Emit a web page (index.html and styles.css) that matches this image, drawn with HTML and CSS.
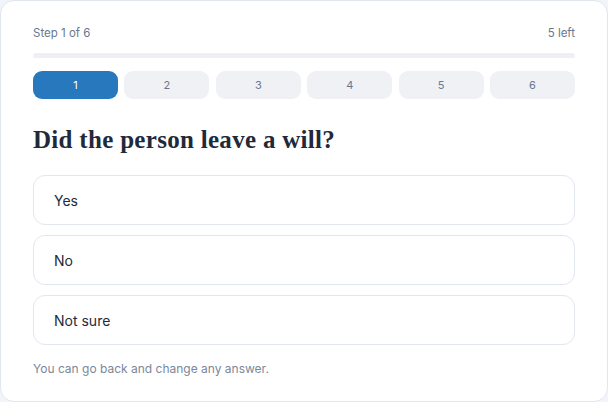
FILE: index.html
```html
<!DOCTYPE html>
<html>
<head>
<meta charset="utf-8">
<link rel="stylesheet" href="styles.css">
</head>
<body>
<div class="card">
  <div class="meta">
    <span>Step 1 of 6</span>
    <span>5 left</span>
  </div>
  <div class="bar"><div class="bar-fill" style="width:0%"></div></div>
  <div class="steps">
    <div class="step active">1</div>
    <div class="step">2</div>
    <div class="step">3</div>
    <div class="step">4</div>
    <div class="step">5</div>
    <div class="step">6</div>
  </div>
  <h1 class="question">Did the person leave a will?</h1>
  <div class="options">
    <div class="option">Yes</div>
    <div class="option">No</div>
    <div class="option">Not sure</div>
  </div>
  <p class="hint">You can go back and change any answer.</p>
</div>
</body>
</html>
```

FILE: styles.css
```css
* { box-sizing: border-box; }
html, body { margin: 0; padding: 0; }
body {
  background: #f1f4f8;
  font-family: Inter, "Noto Sans", "Liberation Sans", sans-serif;
  width: 608px;
  height: 402px;
}
.card {
  width: 608px;
  height: 402px;
  background: #ffffff;
  border: 1px solid #e2e7ef;
  border-radius: 14px;
  padding: 24px 32px 0 32px;
}
.meta {
  display: flex;
  justify-content: space-between;
  font-size: 11.5px;
  line-height: 16px;
  color: #6b778c;
}
.bar {
  margin-top: 12px;
  height: 5px;
  border-radius: 3px;
  background: #eef0f5;
}
.bar-fill { height: 100%; background: #2878be; border-radius: 3px; }
.steps {
  margin-top: 13px;
  display: grid;
  grid-template-columns: repeat(6, 1fr);
  gap: 6.5px;
}
.step {
  height: 28px;
  border-radius: 9px;
  background: #eff1f5;
  color: #6b778c;
  font-size: 11px;
  display: flex;
  align-items: center;
  justify-content: center;
}
.step.active {
  background: #2878be;
  color: #ffffff;
}
.question {
  margin: 26px 0 0 0;
  font-family: "Liberation Serif", "DejaVu Serif", serif;
  font-weight: bold;
  font-size: 25px;
  line-height: 30px;
  color: #1f2a3a;
  letter-spacing: 0.3px;
}
.options {
  margin-top: 20px;
  display: flex;
  flex-direction: column;
  gap: 10px;
}
.option {
  height: 50px;
  border: 1px solid #e2e7ef;
  border-radius: 12px;
  padding: 0 20px;
  display: flex;
  align-items: center;
  font-size: 14px;
  color: #1f2a3a;
}
.hint {
  margin: 16px 0 0 0;
  font-size: 12px;
  line-height: 16px;
  color: #7a879b;
}
```
